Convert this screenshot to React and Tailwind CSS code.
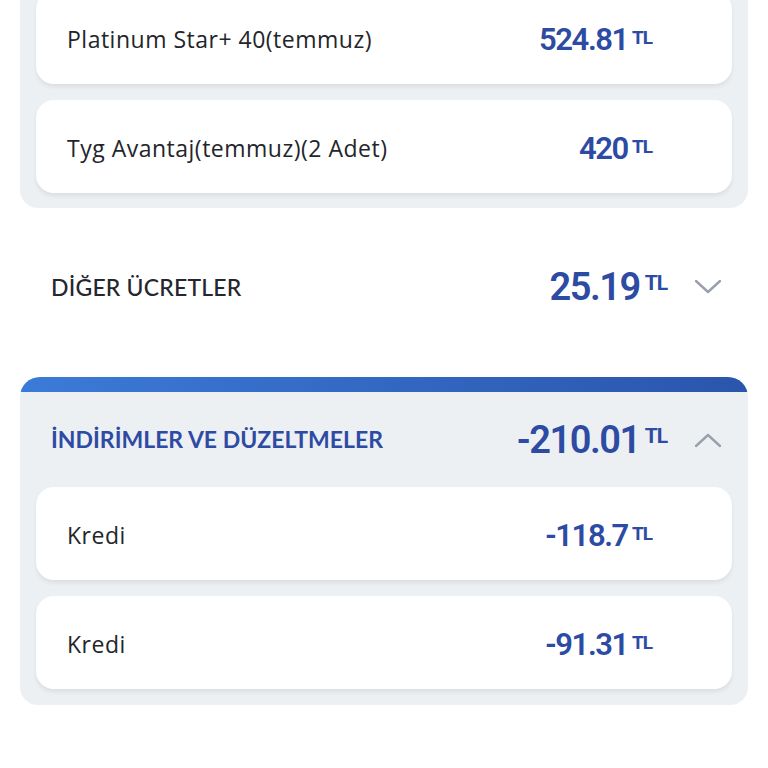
import React from 'react';

const Chevron = ({ up }) => (
  <svg width="28" height="16" viewBox="0 0 28 16" fill="none" stroke="#9aa0ad" strokeWidth="2.4" strokeLinecap="round" strokeLinejoin="round">
    {up ? <polyline points="2,14 14,3 26,14" /> : <polyline points="2,2 14,13 26,2" />}
  </svg>
);

function Amount({ value, big }) {
  return (
    <div className="flex items-start text-[#2d4ba3]">
      <span
        className={
          big
            ? 'text-[38px] leading-none font-semibold tracking-[-1.5px]'
            : 'text-[31px] leading-none font-semibold tracking-[-1.4px]'
        }
        style={{ fontFamily: 'Roboto, sans-serif' }}
      >
        {value}
      </span>
      <span
        className={
          big
            ? 'ml-[5px] mt-[5px] text-[21px] leading-none font-bold tracking-[-1px]'
            : 'ml-[4px] mt-[4px] text-[19px] leading-none font-bold tracking-[-1px]'
        }
        style={{ fontFamily: 'Roboto, sans-serif' }}
      >
        TL
      </span>
    </div>
  );
}

function Row({ label, value }) {
  return (
    <div className="h-[93px] rounded-[18px] bg-white shadow-[0_3px_4px_rgba(0,0,0,0.07)] flex items-center justify-between pt-[4px] pl-[31px] pr-[80px]">
      <span className="text-[23px] text-[#23252b] tracking-[0.5px]" style={{ fontFamily: '"Open Sans", sans-serif' }}>{label}</span>
      <Amount value={value} />
    </div>
  );
}

export default function App() {
  return (
    <div className="w-[768px] h-[768px] overflow-hidden bg-white">
      <div className="-mt-[9px] mx-[20px] bg-[#edf0f3] rounded-b-[18px] px-[16px] pb-[15px] flex flex-col gap-[16px]">
        <Row label="Platinum Star+ 40(temmuz)" value="524.81" />
        <Row label="Tyg Avantaj(temmuz)(2 Adet)" value="420" />
      </div>

      <div className="mx-[20px] h-[169px] pb-[11px] flex items-center justify-between pl-[31px] pr-[26px]">
        <span className="text-[23px] font-medium text-[#25272d] tracking-[0.2px]" style={{ fontFamily: 'Lato, sans-serif' }}>DİĞER ÜCRETLER</span>
        <div className="flex items-center gap-[27px]">
          <Amount value="25.19" big />
          <Chevron />
        </div>
      </div>

      <div className="mx-[20px] rounded-t-[20px] rounded-b-[18px] overflow-hidden bg-[#edf0f3]">
        <div className="h-[15px] bg-gradient-to-r from-[#3b7bd8] to-[#2b55ad]" />
        <div className="h-[95px] flex items-center justify-between pl-[31px] pr-[26px]">
          <span className="text-[23px] font-bold text-[#2d4ba3]" style={{ fontFamily: 'Lato, sans-serif' }}>İNDİRİMLER VE DÜZELTMELER</span>
          <div className="flex items-center gap-[27px]">
            <Amount value="-210.01" big />
            <Chevron up />
          </div>
        </div>
        <div className="px-[16px] pb-[16px] flex flex-col gap-[16px]">
          <Row label="Kredi" value="-118.7" />
          <Row label="Kredi" value="-91.31" />
        </div>
      </div>
    </div>
  );
}
